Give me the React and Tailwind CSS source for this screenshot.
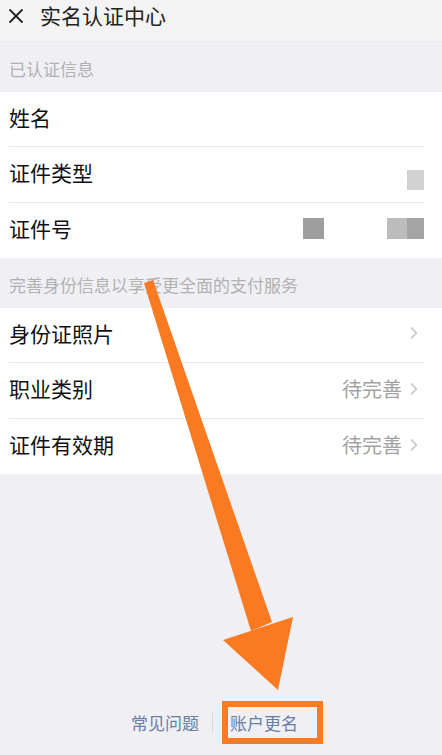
import { X, ChevronRight } from 'lucide-react';

const font = { fontFamily: '"Noto Sans CJK SC", "Noto Sans", sans-serif' };

const Row = ({ label, value, arrow, last, children }) => (
    <div className="flex h-[55.5px] items-center pl-[9px] pr-[18px]">
        <div className={`flex h-full flex-1 items-center pb-[3px] ${last ? '' : 'border-b border-[#e8e8e8]'}`}>
            <span className="flex-1 text-[21px] leading-none text-[#111]">{label}</span>
            {children}
            {value && <span className="text-[20px] leading-none text-[#a3a3a3]">{value}</span>}
            {arrow && <ChevronRight className="ml-[2px] h-[20px] w-[20px] text-[#c4c4c4]" strokeWidth={2} />}
        </div>
    </div>
);

const SectionLabel = ({ children }) => (
    <div className="flex h-[49.5px] items-center px-[9px] pt-[4px] text-[17px] leading-none text-[#b2b2b2]">{children}</div>
);

export default function App() {
    return (
        <div className="relative h-[755px] w-[442px] overflow-hidden bg-[#efeff4]" style={font}>
            {/* header */}
            <div className="flex h-[42px] items-center border-b border-[#ebebeb] bg-[#f3f3f3] pb-[10px] pl-[4px]">
                <X className="h-[24px] w-[24px] text-[#222]" strokeWidth={1.8} />
                <span className="ml-[12px] text-[21px] leading-none text-[#222]">实名认证中心</span>
            </div>

            <SectionLabel>已认证信息</SectionLabel>
            <div className="bg-white">
                <Row label="姓名" />
                <Row label="证件类型">
                    <div className="mt-[14px] h-[20px] w-[17px] bg-[#d2d2d2]" />
                </Row>
                <Row label="证件号" last>
                    <div className="h-[21px] w-[21px] bg-[#9e9e9e]" />
                    <div className="ml-[63px] h-[21px] w-[20px] bg-[#bcbcbc]" />
                    <div className="h-[21px] w-[17px] bg-[#a4a4a4]" />
                </Row>
            </div>

            <SectionLabel>完善身份信息以享受更全面的支付服务</SectionLabel>
            <div className="bg-white">
                <Row label="身份证照片" arrow />
                <Row label="职业类别" value="待完善" arrow />
                <Row label="证件有效期" value="待完善" arrow last />
            </div>

            {/* footer links */}
            <div className="absolute bottom-[11px] left-0 right-0 flex items-center justify-center pl-[12px]">
                <span className="text-[17px] leading-none text-[#6b7ea3]">常见问题</span>
                <span className="ml-[13px] mr-[9px] h-[20px] w-px bg-[#d6d6d6]" />
                <span className="border-[6px] border-[#f97a22] pb-[7px] pl-[2px] pr-[19px] pt-[7px] text-[17px] leading-none text-[#6b7ea3]">账户更名</span>
            </div>

            {/* annotation arrow */}
            <svg className="pointer-events-none absolute left-0 top-0" width="442" height="755" viewBox="0 0 442 755">
                <polygon points="144,283 153,280 272,622 251,631" fill="#fa7a22" />
                <polygon points="223,640 293,617 278,690" fill="#fa7a22" />
            </svg>
        </div>
    );
}
